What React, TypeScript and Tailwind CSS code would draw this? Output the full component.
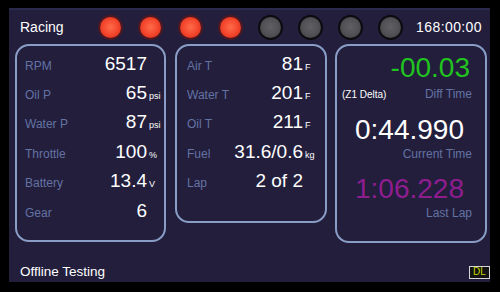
import React from "react";

const font = { fontFamily: '"Liberation Sans", Arial, sans-serif' };

function Led({ on }: { on: boolean }) {
  return on ? (
    <div className="w-[25px] h-[25px] shrink-0 rounded-full border-[2px] border-[#4e1822] bg-[radial-gradient(circle_at_50%_48%,#ff6c4a_0%,#f4462c_52%,#dc3420_78%,#9a2420_100%)]" />
  ) : (
    <div className="w-[25px] h-[25px] shrink-0 rounded-full border-[2px] border-[#0b0b10] bg-[radial-gradient(circle_at_50%_48%,#606064_0%,#505055_55%,#404046_80%,#2a2a30_100%)]" />
  );
}

type Row = { label: string; value: string; unit?: string };

const p1: Row[] = [
  { label: "RPM", value: "6517" },
  { label: "Oil P", value: "65", unit: "psi" },
  { label: "Water P", value: "87", unit: "psi" },
  { label: "Throttle", value: "100", unit: "%" },
  { label: "Battery", value: "13.4", unit: "V" },
  { label: "Gear", value: "6" },
];

const p2: Row[] = [
  { label: "Air T", value: "81", unit: "F" },
  { label: "Water T", value: "201", unit: "F" },
  { label: "Oil T", value: "211", unit: "F" },
  { label: "Fuel", value: "31.6/0.6", unit: "kg" },
  { label: "Lap", value: "2 of 2" },
];

function Rows({ rows, unitW, pl }: { rows: Row[]; unitW: string; pl: string }) {
  return (
    <div className={`flex flex-col pt-[2.7px] ${pl}`}>
      {rows.map((r) => (
        <div key={r.label} className="flex items-baseline h-[29.4px] leading-[29.4px]">
          <span className="flex-1 text-[12px] text-[#6473a4]">{r.label}</span>
          <span className="text-[19px] text-white whitespace-nowrap">{r.value}</span>
          <span className={`${unitW} shrink-0 pl-[2px] text-[9px] text-white`}>{r.unit ?? ""}</span>
        </div>
      ))}
    </div>
  );
}

export default function App() {
  return (
    <div style={font} className="w-[500px] h-[292px] bg-black pl-[9px] pt-[8px]">
      <div className="w-[481px] h-[274px] bg-[#221e3c] flex flex-col border-t-2 border-[#2c2a4c]">
        {/* header */}
        <div className="h-[34px] flex items-center pl-[11px] pr-[8px]">
          <div className="w-[77.5px] shrink-0 text-[14px] text-white">Racing</div>
          <div className="flex gap-[15px]">
            <Led on />
            <Led on />
            <Led on />
            <Led on />
            <Led on={false} />
            <Led on={false} />
            <Led on={false} />
            <Led on={false} />
          </div>
          <div className="ml-auto text-[14px] tracking-[0.4px] text-white">168:00:00</div>
        </div>
        {/* panels */}
        <div className="flex items-start pl-[6px] h-[199px]">
          <div className="w-[151px] h-[198px] rounded-[14px] border-2 border-[#899dc6]">
            <Rows rows={p1} unitW="w-[17px]" pl="pl-[8px]" />
          </div>
          <div className="ml-[9px] w-[152px] h-[179px] rounded-[14px] border-2 border-[#899dc6]">
            <Rows rows={p2} unitW="w-[22px]" pl="pl-[10px]" />
          </div>
          <div className="ml-[8px] w-[152px] h-[199px] rounded-[14px] border-2 border-[#899dc6] flex flex-col pt-[8.3px]">
            <div className="text-[28px] leading-[28px] text-[#21c41f] text-right pr-[15px]">-00.03</div>
            <div className="mt-[4px] h-[16px] flex items-center justify-between pl-[5px] pr-[13px]">
              <span className="text-[10px] text-white">(Z1 Delta)</span>
              <span className="text-[12px] text-[#6473a4]">Diff Time</span>
            </div>
            <div className="mt-[13.3px] text-[28px] leading-[28px] text-white text-center pr-[3px]">0:44.990</div>
            <div className="mt-[2.7px] h-[16px] leading-[16px] text-[12px] text-[#6473a4] text-right pr-[13px]">Current Time</div>
            <div className="mt-[12.3px] text-[28px] leading-[28px] text-[#8e1d8f] text-center pr-[3px]">1:06.228</div>
            <div className="mt-[2.7px] h-[16px] leading-[16px] text-[12px] text-[#6473a4] text-right pr-[13px]">Last Lap</div>
          </div>
        </div>
        {/* footer */}
        <div className="mt-[19px] h-[20px] flex items-center justify-between pl-[11px]">
          <span className="text-[13.5px] text-white">Offline Testing</span>
          <div className="w-[21px] h-[13px] border border-[#d6d6d6] bg-[#141414] flex items-center justify-center text-[10px] leading-[10px] text-[#c6d400]">
            DL
          </div>
        </div>
      </div>
    </div>
  );
}
